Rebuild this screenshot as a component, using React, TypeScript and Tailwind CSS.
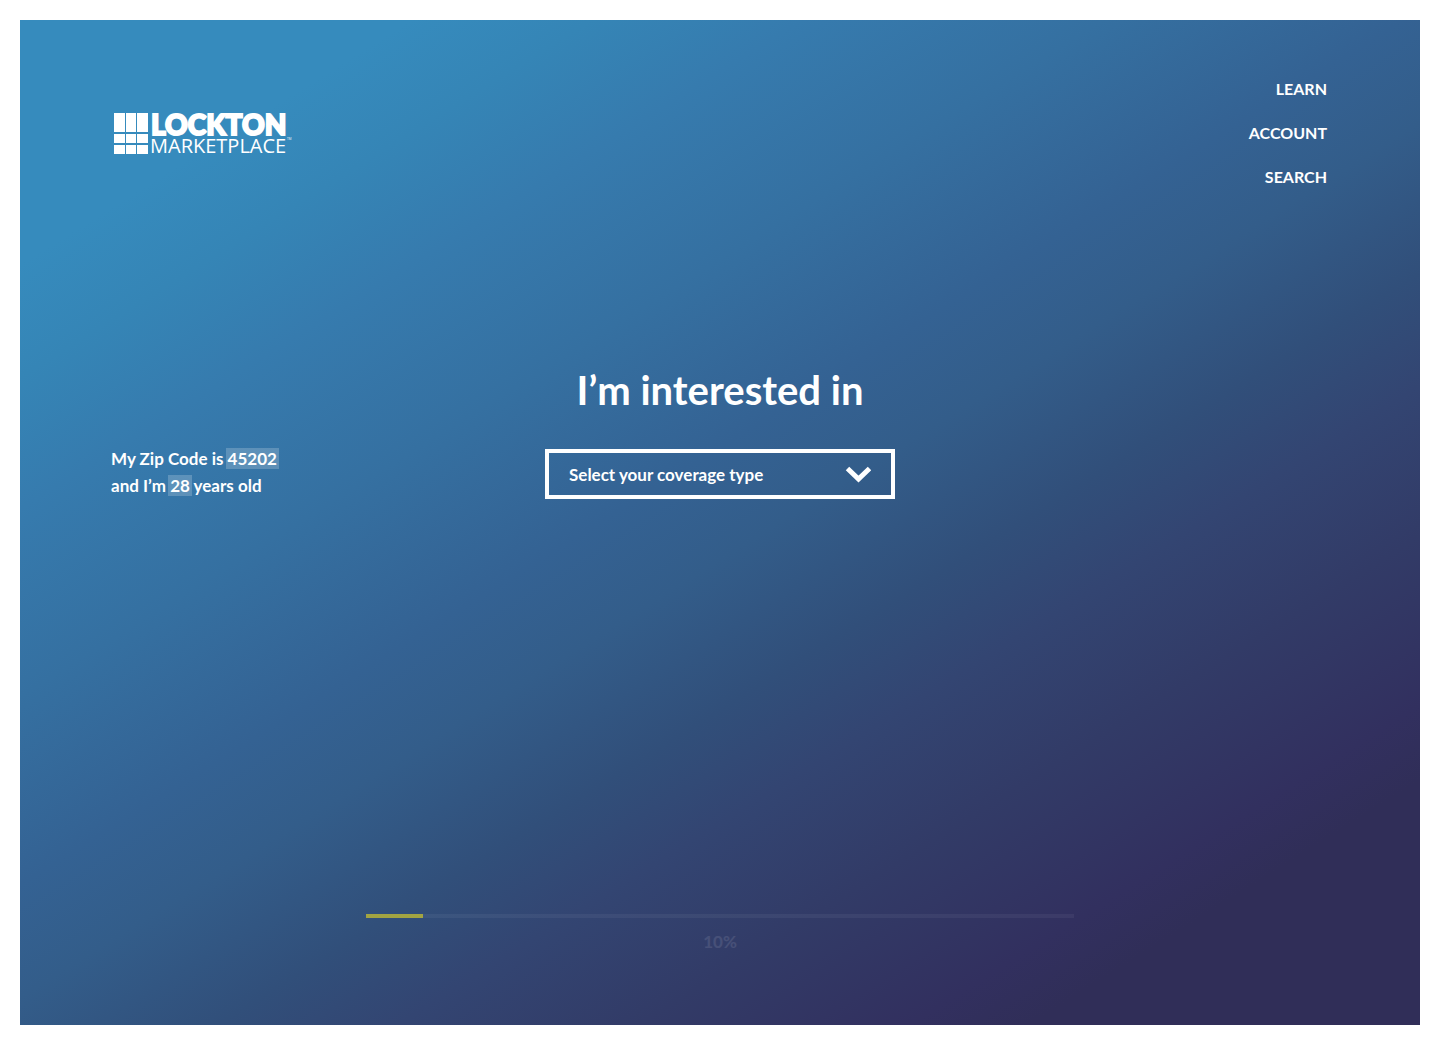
import { ChangeEvent, useState } from 'react';

const navItems = ['Learn', 'Account', 'Search'];
const coverageTypes = ['Medical', 'Dental', 'Vision', 'Life'];

const Logo = () => (
  <svg width="184" height="56" viewBox="0 0 184 56" fill="#fff" role="img" aria-label="Lockton Marketplace">
    <path d="M1 7h11v19H1zM13 7h10v19H13zM24 7h11v19H24zM1 28h11v9H1zM13 28h10v9H13zM24 28h11v9H24zM1 39h11v9H1zM13 39h10v9H13zM24 39h11v9H24z" />
    <text x="38" y="29" fontSize="28" fontWeight="900" stroke="#fff" strokeWidth="2" fontFamily="Lato, sans-serif">LOCKTON</text>
    <text x="37" y="47" fontSize="20" fontFamily="'Open Sans', sans-serif">MARKETPLACE</text>
    <text x="174" y="34" fontSize="3" fontFamily="'Open Sans', sans-serif">TM</text>
  </svg>
);

const Header = () => (
  <header className="flex items-start justify-between">
    <a href="#" className="mt-[29px] ml-0.5 block">
      <Logo />
    </a>
    <nav className="flex flex-col items-end gap-5 pr-0.5">
      {navItems.map((item) => (
        <a key={item} href="#" className="text-base leading-6 font-bold uppercase">
          {item}
        </a>
      ))}
    </nav>
  </header>
);

const Answers = () => (
  <p className="pt-20 text-[17px] leading-[27px] font-bold">
    My Zip Code is <span className="-mx-0.5 bg-white/20 px-0.5">45202</span>
    <br />
    and I’m <span className="-mx-0.5 bg-white/20 px-0.5">28</span> years old
  </p>
);

const CoverageSelect = () => {
  const [coverage, setCoverage] = useState('');

  return (
    <div className="flex flex-col items-center gap-[34px]">
      <label htmlFor="coverage" className="text-[40px] leading-[50px] font-bold">
        I’m interested in
      </label>
      <div className="relative w-[350px]">
        <select
          id="coverage"
          value={coverage}
          onChange={(e: ChangeEvent<HTMLSelectElement>) => setCoverage(e.target.value)}
          className="block h-[50px] w-full appearance-none border-4 border-white bg-transparent px-5 pt-0.5 text-[17px] font-bold text-white"
        >
          <option value="">Select your coverage type</option>
          {coverageTypes.map((type) => (
            <option key={type} className="text-gray-900">
              {type}
            </option>
          ))}
        </select>
        <svg className="pointer-events-none absolute top-4 right-6" width="26" height="18" viewBox="0 0 26 18" fill="none" stroke="#fff" strokeWidth="5">
          <path d="M2.5 3.5L13.5 14L24.5 3.5" />
        </svg>
      </div>
    </div>
  );
};

const Progress = ({ value }: { value: number }) => (
  <div className="mx-auto w-full max-w-[708px]">
    <div className="h-1 bg-white/5">
      <div className="h-full w-[57px] bg-[#a2a442]" />
    </div>
    <p className="mt-3 text-center text-[17px] leading-6 font-bold text-white/10">{value}%</p>
  </div>
);

export default function App() {
  return (
    <div className="min-h-screen bg-white p-5 font-[Lato,sans-serif] text-white">
      <main className="flex min-h-[calc(100vh-40px)] flex-col bg-[linear-gradient(148deg,#368bbd_0%,#368bbd_13%,#3585b6_19%,#367bae_26%,#3570a1_36%,#346293_46%,#335d8a_52%,#314f7a_60%,#334572_66%,#323b67_74%,#32305f_83%,#302e58_87%,#302e58_100%)] px-[91px] pt-[57px] pb-[71px]">
        <Header />
        <div className="mt-[176px] grid grid-cols-[1fr_auto_1fr]">
          <Answers />
          <CoverageSelect />
        </div>
        <div className="mt-auto">
          <Progress value={10} />
        </div>
      </main>
    </div>
  );
}
